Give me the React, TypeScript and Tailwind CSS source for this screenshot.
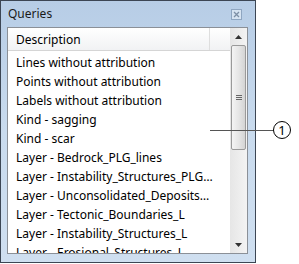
import React from "react";

const rows = [
  "Lines without attribution",
  "Points without attribution",
  "Labels without attribution",
  "Kind - sagging",
  "Kind - scar",
  "Layer - Bedrock_PLG_lines",
  "Layer - Instability_Structures_PLG_Indicators",
  "Layer - Unconsolidated_Deposits_PLG",
  "Layer - Tectonic_Boundaries_L",
  "Layer - Instability_Structures_L",
  "Layer - Erosional_Structures_L",
];

function CloseBox() {
  return (
    <div className="flex h-[11px] w-[11px] items-center justify-center border border-[#8fa6c1] bg-[#d6e3f1]">
      <svg width="7" height="7" viewBox="0 0 7 7">
        <path d="M1 1 L6 6 M6 1 L1 6" stroke="#7d8fa5" strokeWidth="1.3" />
      </svg>
    </div>
  );
}

function Arrow({ up }: { up?: boolean }) {
  return (
    <div className="flex h-[17px] items-center justify-center">
      <svg width="7" height="4" viewBox="0 0 7 4">
        <path d={up ? "M3.5 0 L7 4 L0 4 Z" : "M0 0 L7 0 L3.5 4 Z"} fill="#333" />
      </svg>
    </div>
  );
}

function Scrollbar() {
  return (
    <div className="flex w-[17px] flex-col bg-gradient-to-r from-[#e6e6e6] to-[#f3f3f3]">
      <Arrow up />
      <div className="mx-px h-[105px] rounded-[2px] border border-[#9a9a9a] bg-gradient-to-r from-[#f4f4f4] via-[#e6e6e6] to-[#d4d4d4] flex items-center justify-center">
        <div className="flex flex-col gap-[1px]">
          <div className="h-px w-[6px] bg-[#666]" />
          <div className="h-px w-[6px] bg-[#666]" />
          <div className="h-px w-[6px] bg-[#666]" />
        </div>
      </div>
      <div className="flex-1" />
      <Arrow />
    </div>
  );
}

export default function App() {
  return (
    <div className="relative h-[264px] w-[299px] bg-white font-['Noto_Sans',sans-serif] text-[12px] text-black">
      <div className="flex h-[263px] w-[256px] flex-col border border-[#3c4654] bg-gradient-to-b from-[#b7cde6] via-[#c9dbee] to-[#cfdff0]">
        <div className="flex h-[26px] items-center justify-between pl-[7px] pr-[13px]">
          <span className="text-[#1a1a1a]">Queries</span>
          <CloseBox />
        </div>
        <div className="mb-[8px] ml-[6px] mr-[7px] flex flex-1 overflow-hidden border border-[#8b9097] bg-white">
          <div className="flex min-w-0 flex-1 flex-col">
            <div className="flex h-[23px] shrink-0 border-b border-[#d5d5d5] bg-gradient-to-b from-white to-[#f1f2f4]">
              <div className="flex w-[202px] items-center border-r border-[#dedede] pl-[8px] pt-px">Description</div>
            </div>
            <div className="flex flex-col pt-[2px]">
              {rows.map((r) => (
                <div key={r} className="flex h-[19px] shrink-0 items-center pl-[8px]">
                  <span className="block w-[197px] truncate">{r}</span>
                </div>
              ))}
            </div>
          </div>
          <Scrollbar />
        </div>
      </div>
      <div className="absolute left-[210px] top-[130px] h-px w-[64px] bg-[#555]" />
      <div className="absolute left-[273px] top-[121px] flex h-[18px] w-[18px] items-center justify-center rounded-full border border-black bg-white text-[13px] leading-none">
        1
      </div>
    </div>
  );
}
